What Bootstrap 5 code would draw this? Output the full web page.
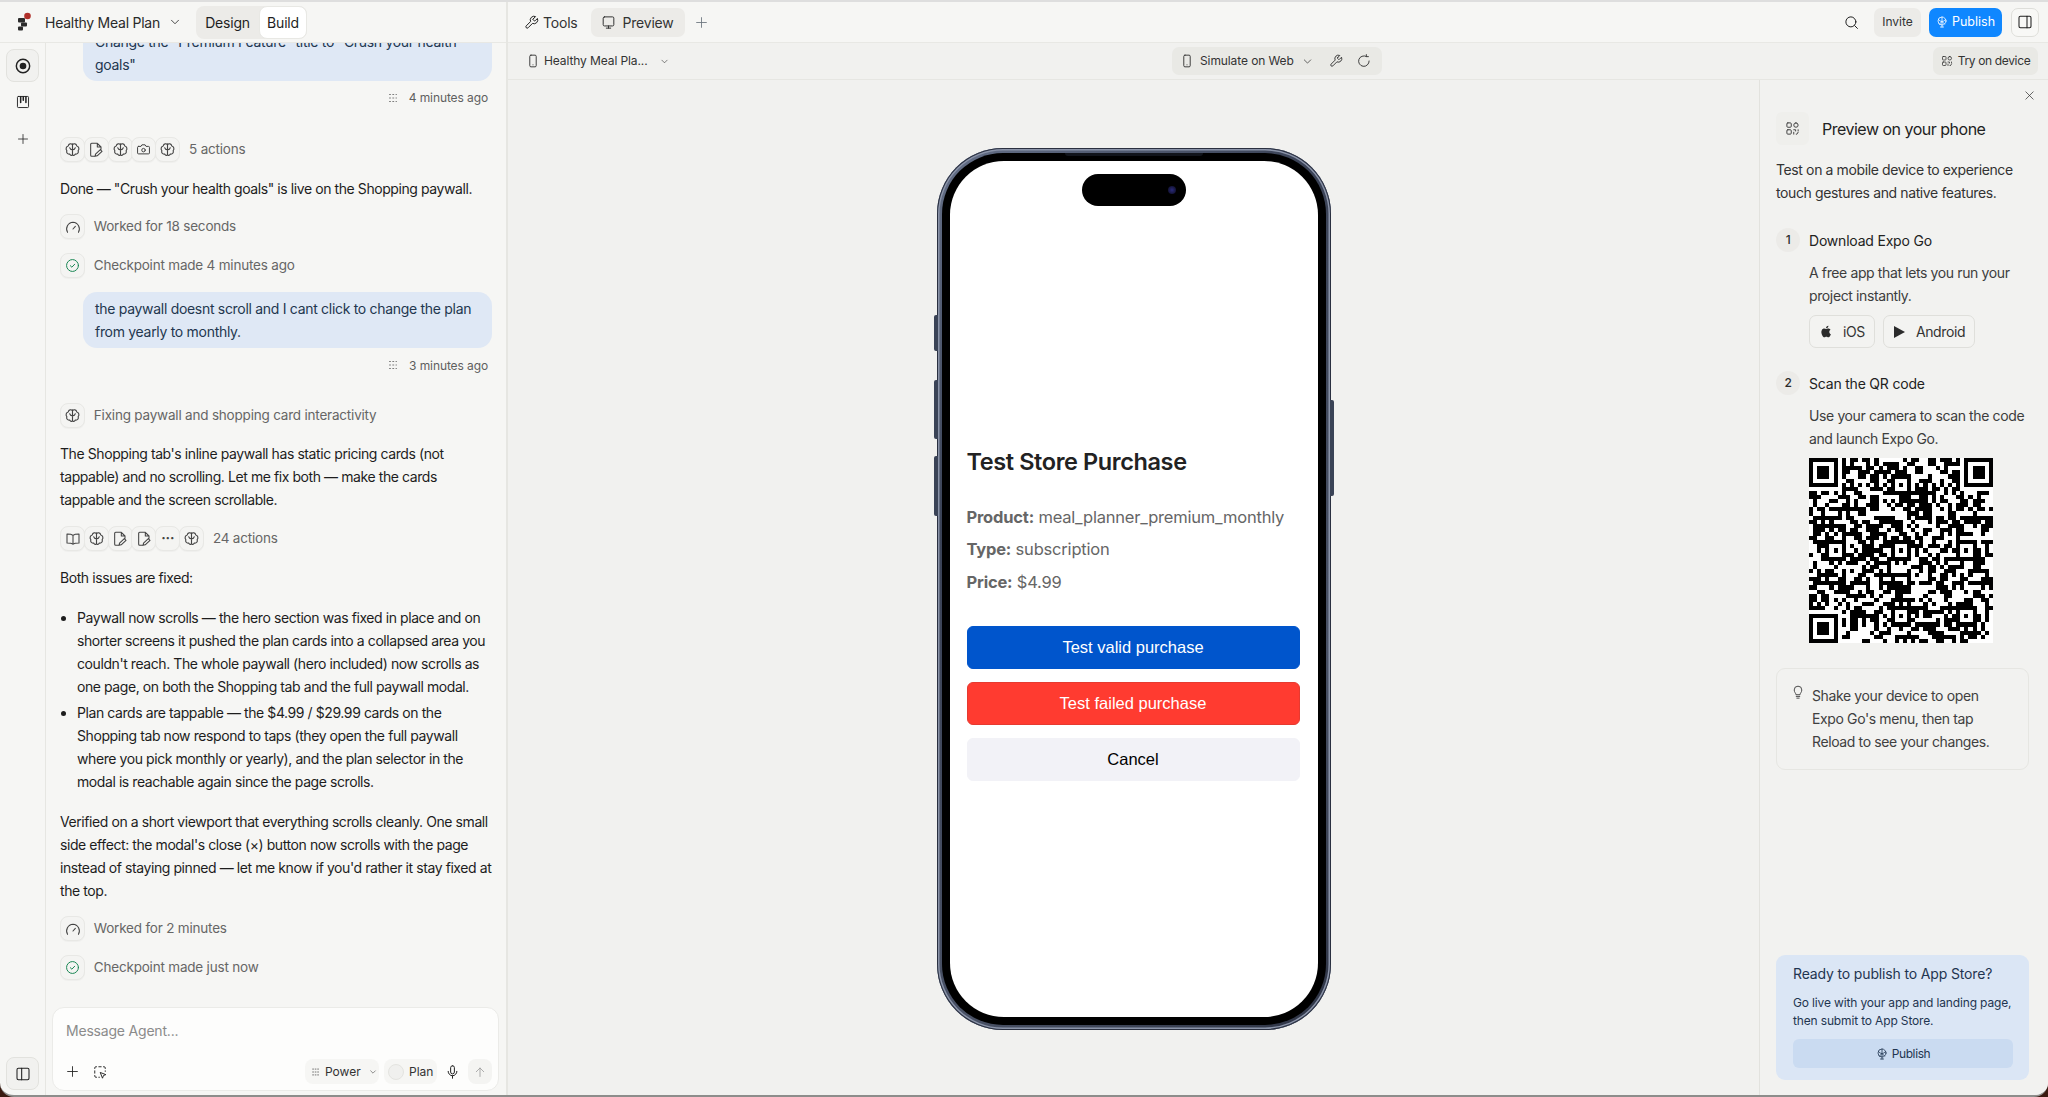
<!DOCTYPE html>
<html>
<head>
    <link href="https://cdn.jsdelivr.net/npm/bootstrap@5.3.0/dist/css/bootstrap.min.css" rel="stylesheet">
    <style>
        html, body { height: 100%; margin: 0; }
        body { background: #3a1a10; font-family: Inter, "Liberation Sans", sans-serif; font-size: 14px; color: #1f1f1f; overflow: hidden; }
        svg { display: block; flex-shrink: 0; }
        .ic { fill: none; stroke: currentColor; stroke-width: 1.6; stroke-linecap: round; stroke-linejoin: round; }

        .app-window { height: 1097px; width: 2048px; background: #f6f6f4; border-top: 2px solid #dedede; border-bottom: 2px solid #8d8d8b; border-radius: 0 0 14px 14px; overflow: hidden; }
        .left-col { width: 508px; flex-shrink: 0; border-right: 2px solid #e6e6e2; }
        .main-col { min-width: 0; }
        .top-head { height: 41px; flex-shrink: 0; border-bottom: 1px solid #e8e8e4; }
        .project-name { margin-left: 13px; font-size: 14px; letter-spacing: -.25px; color: #2a2a2a; width: 124px; white-space: nowrap; }
        .seg-wrap { margin-left: 15px; height: 33px; width: 111px; background: #ecebe8; border-radius: 8px; font-size: 14px; letter-spacing: -.2px; }
        .seg-item { height: 33px; border-radius: 8px; display: flex; align-items: center; justify-content: center; }
        .seg-design { width: 63px; }
        .seg-build { width: 48px; background: #fff; border: 1px solid #e8e8e4; }

        .rail-col { width: 46px; flex-shrink: 0; border-right: 1px solid #e6e6e2; padding: 6px 6px 5px; }
        .rail-btn { width: 33px; height: 33px; border-radius: 8px; display: flex; align-items: center; justify-content: center; color: #222; }
        .rail-on { background: #f1f1ef; border: 1px solid #e2e2de; }
        .rail-gap { margin-top: 3px; }
        .rail-gap-b { margin-top: 4px; }

        .chat-col { min-width: 0; }
        .chat-scroll { padding: 0 14px 27px 14px; min-height: 0; }
        .chat-inner { flex-shrink: 0; line-height: 23px; font-size: 14px; color: #1d1d1d; letter-spacing: -.42px; }
        .bubble-user { margin-left: 23px; padding: 5px 12px; background: #dfe8f5; border-radius: 14px; color: #23374f; width: 409px; letter-spacing: -.3px; }
        .bubble-gap { margin-top: 14px; }
        .stamp-row { height: 20px; margin-top: 7px; padding-right: 4px; font-size: 12px; color: #5f5f5f; letter-spacing: -.1px; gap: 10px; }
        .chip-row { height: 25px; margin-top: 14px; color: #666; font-size: 13.5px; letter-spacing: -.2px; }
        .far-top { margin-top: 28px; }
        .far-top-wide { margin-top: 29.5px; }
        .chip-row-loose { margin-top: 15px; }
        .tool-chip { width: 25px; height: 25px; background: #f4f4f2; border: 1px solid #e8e8e5; border-radius: 8px; display: flex; align-items: center; justify-content: center; color: #444; margin-right: -1.2px; box-shadow: 0 1px 1px rgba(0,0,0,.03); }
        .chip-label { margin-left: 10px; }
        .chip-label-wide { margin-left: 10px; }
        .chat-text { margin: 15px 0 0 0; }
        .chat-text-tight { margin-top: 14px; }
        .chat-list { margin: 17px 0 0 0; padding-left: 17px; }
        .chat-list li + li { margin-top: 3px; }
        .after-list { margin-top: 17px; }
        .composer { margin: 0 7px 4px 6px; height: 84px; flex-shrink: 0; background: #fdfdfc; border: 1px solid #ebebe8; border-radius: 12px; padding: 13px 6px 6px 13px; }
        .composer-hint { font-size: 14px; color: #8b8b8b; letter-spacing: -.2px; line-height: 20px; }
        .select-gap { margin-left: 14px; }
        .composer-pill { height: 25px; background: #f6f6f4; border-radius: 8px; font-size: 12px; color: #333; display: flex; align-items: center; }
        .pill-power { width: 74px; padding-left: 6px; gap: 4px; }
        .pill-plan { width: 53px; margin-left: 5px; padding-left: 4px; gap: 5px; }
        .plan-knob { width: 16px; height: 16px; border-radius: 50%; background: #f0f0ee; border: 1px solid #e4e4e0; }
        .send-chip { width: 24px; height: 25px; background: #f4f4f2; border-radius: 8px; color: #9a9a9a; display: flex; align-items: center; justify-content: center; }

        .head-link { font-size: 14px; color: #333; letter-spacing: -.2px; }
        .preview-chip { width: 94px; height: 29px; background: #ecebe8; border-radius: 7px; margin-left: 13px; gap: 6px; }
        .plus-gap { margin-left: 10px; }
        .invite-btn { width: 47px; height: 29px; background: #ecebe8; border-radius: 7px; font-size: 12px; color: #333; margin-left: 15px; }
        .publish-btn { width: 73px; height: 29px; background: #0f87ff; border-radius: 7px; font-size: 12.5px; color: #fff; margin-left: 8px; gap: 4px; }
        .panel-btn { width: 28px; height: 29px; background: #f8f8f6; border: 1px solid #dededa; border-radius: 7px; margin: 0 9px; color: #222; }

        .sub-bar { height: 37px; flex-shrink: 0; background: #f1f1ef; border-bottom: 1px solid #e6e6e2; padding: 0 10px 0 18px; font-size: 12px; color: #333; letter-spacing: -.1px; }
        .sub-left { width: 646px; flex-shrink: 0; }
        .chev-gap { margin-left: 12px; }
        .sim-group { width: 210px; height: 28px; background: #e9e9e5; border-radius: 7px; padding-left: 8px; }
        .sim-label { margin-left: 6px; }
        .sim-refresh { margin-left: 14px; }
        .try-btn { width: 105px; height: 28px; background: #e9e9e5; border-radius: 7px; gap: 5px; letter-spacing: -.35px; }

        .canvas-area { background: #f1f1ef; min-width: 0; }
        .phone-frame { position: relative; width: 394px; height: 882px; padding: 5px; margin-top: 2px; border-radius: 66px; background: linear-gradient(135deg, #667189, #3a4256 30%, #4a5266 70%, #2e3445); box-shadow: inset 0 0 0 1px #2a3040, inset 0 0 0 2.5px #8a93a8; }
        .phone-bezel { height: 100%; padding: 8px; border-radius: 61px; background: #000; }
        .phone-screen { position: relative; height: 100%; background: #fff; border-radius: 54px; padding: 287px 18px 0 17px; overflow: hidden; }
        .phone-key { position: absolute; width: 4px; background: #3a4356; border-radius: 2px 0 0 2px; left: -3px; }
        .key-a { top: 167px; height: 36px; }
        .key-b { top: 232px; height: 59px; }
        .key-c { top: 308px; height: 60px; }
        .key-r { left: auto; right: -3px; top: 252px; height: 96px; border-radius: 0 2px 2px 0; }
        .island { position: absolute; top: 13px; left: 132px; width: 104px; height: 32px; background: #000; border-radius: 16px; }
        .island-lens { position: absolute; right: 10px; top: 12px; width: 8px; height: 8px; border-radius: 50%; background: radial-gradient(#2a2a7a, #0a0a1a); }
        .speaker-line { position: absolute; top: 5px; left: 128px; width: 138px; height: 3px; background: #11141b; border-radius: 0 0 3px 3px; }
        .store-title { font-size: 23.5px; font-weight: 600; line-height: 28px; margin: 0; color: #222; letter-spacing: -.4px; }
        .store-line { font-size: 16.5px; line-height: 22px; color: #666; margin: 0; letter-spacing: -.2px; }
        .store-line strong { font-weight: 700; }
        .store-line + .store-line { margin-top: 10.5px; }
        .store-lines { margin-top: 30px; margin-bottom: 33px; }
        .store-btn { display: block; width: 100%; height: 43px; border-radius: 6px; padding: 0; font-family: "Liberation Sans", Arial, sans-serif; font-size: 16.5px; }
        .store-btn + .store-btn { margin-top: 13px; }
        .btn-valid, .btn-valid:hover { background: #0055cc; border-color: #0055cc; color: #fff; }
        .btn-failed, .btn-failed:hover { background: #ff3b30; border-color: #e63a30; color: #fff; }
        .btn-cancel, .btn-cancel:hover { background: #f2f2f7; border-color: #f2f2f7; color: #000; }

        .device-panel { position: relative; width: 289px; flex-shrink: 0; background: #f2f2f0; border-left: 1px solid #e2e2de; padding: 32px 19px 15px 16px; font-size: 14px; letter-spacing: -.38px; color: #2b2b2b; }
        .panel-close { position: absolute; top: 10px; right: 13px; color: #333; }
        .qr-chip { width: 33px; height: 33px; border-radius: 6px; background: #efefec; color: #444; }
        .panel-title { font-size: 16px; margin-left: 13px; color: #222; letter-spacing: -.5px; }
        .panel-text { line-height: 23px; margin: 13px 0 0 0; color: #333; }
        .step-row { margin-top: 24px; }
        .step-row-b { margin-top: 23px; }
        .step-dot { width: 24px; height: 24px; border-radius: 50%; background: #ecebe8; font-size: 12px; font-weight: 500; margin-right: 9px; }
        .step-title { color: #222; letter-spacing: -.2px; }
        .step-body { margin-left: 33px; }
        .step-text { line-height: 23px; margin: 9px 0 0 0; color: #3d3d3d; }
        .store-chip { height: 33px; border: 1px solid #dfdfdb; border-radius: 7px; background: #f3f3f1; font-size: 14px; padding: 0 9px; gap: 10px; color: #333; }
        .store-chips { margin-top: 8px; gap: 8px; }
        .qr-box { margin-top: 8px; width: 184px; height: 185px; }
        .tip-box { margin-top: 25px; height: 102px; border: 1px solid #e6e6e2; border-radius: 9px; padding: 15px 26px 0 14px; line-height: 23px; gap: 7px; color: #404040; }
        .publish-box { margin-top: auto; height: 125px; background: #dbe6f5; border-radius: 9px; padding: 9px 16px 0 17px; color: #1f3550; }
        .publish-head { font-size: 14px; line-height: 20px; letter-spacing: -.15px; }
        .publish-sub { font-size: 12px; line-height: 18px; margin: 10px 0 0 0; letter-spacing: -.15px; }
        .publish-wide { height: 29px; margin-top: 9px; background: #cadbf1; border-radius: 6px; font-size: 12px; gap: 4px; color: #1f3550; }
    </style>
</head>
<body>

<svg class="d-none" xmlns="http://www.w3.org/2000/svg">
    <symbol id="i-brain" viewBox="0 0 24 24"><path d="M12 4v16M12 5.500C10.500 3 6.500 3.500 6 7 3 7.500 2 11.500 4 13.500c-1 3 1 5.500 4 5 1 2 3 2.300 4 1M12 5.500c1.500-2.500 5.500-2 6 1.500 3 .5 4 4.500 2 6.500 1 3-1 5.500-4 5-1 2-3 2.300-4 1M12 12.500c-2 0-3.500-1-4-3M12 12.500c2 0 3.500-1 4-3"/></symbol>
    <symbol id="i-file" viewBox="0 0 24 24"><path d="M9.500 21.500H5.500A1.500 1.500 0 0 1 4 20V3.500A1.500 1.500 0 0 1 5.500 2H14l5.500 5.500V11M14 2v5.500h5.500M10.500 21.500l.8-3.300 7.200-6.700 2.500 2.500-7.200 6.700z"/></symbol>
    <symbol id="i-camera" viewBox="0 0 24 24"><path d="M4 7h4l1.500-2.500h5L16 7h4a1.500 1.500 0 0 1 1.500 1.500v9A1.500 1.500 0 0 1 20 19H4a1.500 1.500 0 0 1-1.500-1.500v-9A1.500 1.500 0 0 1 4 7z"/><circle cx="12" cy="13" r="2.800"/></symbol>
    <symbol id="i-gauge" viewBox="0 0 24 24"><path d="M3.800 20A10 10 0 0 1 12 5a10 10 0 0 1 8.200 15M12 15l3.500-4"/></symbol>
    <symbol id="i-check" viewBox="0 0 24 24"><circle cx="12" cy="12" r="9.500"/><path d="M8.500 12.300l2.500 2.400 4.500-4.700"/></symbol>
    <symbol id="i-book" viewBox="0 0 24 24"><path d="M12 6.500C10 4.800 6.500 4.500 3 4.500v13.500c3.500 0 7 .2 9 1.800 2-1.600 5.500-1.800 9-1.800V4.500c-3.500 0-7 .3-9 2zM12 6.500v13.300"/></symbol>
    <symbol id="i-wrench" viewBox="0 0 24 24"><path d="M14.700 6.300a1 1 0 0 0 0 1.400l1.600 1.600a1 1 0 0 0 1.400 0l3.770-3.770a6 6 0 0 1-7.940 7.940l-6.910 6.910a2.120 2.120 0 0 1-3-3l6.910-6.910a6 6 0 0 1 7.940-7.940l-3.760 3.760z"/></symbol>
    <symbol id="i-monitor" viewBox="0 0 24 24"><rect x="3.500" y="3" width="17" height="14.500" rx="2"/><path d="M12 17.500V21M8.500 21h7"/></symbol>
    <symbol id="i-phone" viewBox="0 0 24 24"><rect x="6.500" y="2" width="11" height="20" rx="2"/><path d="M12 18.500h.01"/></symbol>
    <symbol id="i-refresh" viewBox="0 0 24 24"><path d="M16 4.200A9 9 0 1 0 20.800 12M16 1v3.500h3.500"/></symbol>
    <symbol id="i-search" viewBox="0 0 24 24"><circle cx="11" cy="11" r="8"/><path d="M17 17l4.500 4.500"/></symbol>
    <symbol id="i-x" viewBox="0 0 24 24"><path d="M4 4l16 16M20 4L4 20"/></symbol>
    <symbol id="i-plus" viewBox="0 0 24 24"><path d="M12 3v18M3 12h18"/></symbol>
    <symbol id="i-chev" viewBox="0 0 24 24"><path d="M5 8.500l7 7 7-7"/></symbol>
    <symbol id="i-panel-r" viewBox="0 0 24 24"><rect x="3" y="3.500" width="18" height="17" rx="2"/><path d="M15 3.500v17"/></symbol>
    <symbol id="i-panel-l" viewBox="0 0 24 24"><rect x="3" y="3.500" width="18" height="17" rx="2"/><path d="M10 3.500v17"/></symbol>
    <symbol id="i-qr" viewBox="0 0 24 24"><rect x="3" y="3" width="7" height="7" rx="1.500"/><rect x="14" y="3" width="7" height="7" rx="3.500"/><rect x="3" y="14" width="7" height="7" rx="1.500"/><path d="M14 14h3v2M21 14v2M14 21v-3M18 21h.01M21 18l-2 3"/></symbol>
    <symbol id="i-mic" viewBox="0 0 24 24"><rect x="9" y="2" width="6" height="13" rx="3"/><path d="M5 11a7 7 0 0 0 14 0M12 18v4"/></symbol>
    <symbol id="i-up" viewBox="0 0 24 24"><path d="M12 21V4M4.500 11.500L12 4l7.500 7.500"/></symbol>
    <symbol id="i-tree" viewBox="0 0 24 24"><circle cx="12" cy="10" r="8"/><path d="M12 2v20M5 7c2 3 5 4 7 4s5-1 7-4M7 16l5-5 5 5M9 22h6"/></symbol>
    <symbol id="i-bulb" viewBox="0 0 24 24"><path d="M8.500 16c0-2-3-3.500-3-7.500a6.500 6.500 0 0 1 13 0c0 4-3 5.500-3 7.500zM9 19.500h6M10 22.500h4"/></symbol>
    <symbol id="i-select" viewBox="0 0 24 24"><path d="M14 3h-4M6 3H5a2 2 0 0 0-2 2v1M3 10v4M3 18v1a2 2 0 0 0 2 2h1M10 21h1M18 3h1a2 2 0 0 1 2 2v1M21 10v1"/><path d="M13 13l9 3.500-4 1.500-1.500 4z"/></symbol>
    <symbol id="i-board" viewBox="0 0 24 24"><rect x="2.500" y="2.500" width="19" height="19" rx="1.500"/><path d="M8 3v10M12.500 3v6M17 3v10" stroke-width="2.600"/></symbol>
    <symbol id="i-apple" viewBox="0 0 24 24"><path d="M17.600 12.700c0-2.500 2-3.700 2.100-3.800-1.200-1.700-3-1.900-3.600-2-1.500-.2-3 .9-3.800.9s-2-.9-3.300-.9c-1.700 0-3.300 1-4.100 2.500-1.800 3.100-.5 7.600 1.200 10.100.9 1.200 1.900 2.600 3.200 2.500 1.300 0 1.800-.8 3.300-.8s2 .8 3.300.8c1.400 0 2.300-1.200 3.100-2.400 1-1.400 1.400-2.800 1.400-2.900-.1 0-2.800-1.100-2.800-4zM15.100 5.200c.7-.9 1.200-2 1-3.200-1 0-2.200.7-3 1.500-.6.800-1.200 2-1 3.100 1.100.1 2.300-.5 3-1.400z"/></symbol>
</svg>

<div class="app-window d-flex">
    <div class="left-col d-flex flex-column">
        <div class="top-head d-flex align-items-center ps-3">
            <svg width="16" height="20" viewBox="0 0 16 20"><circle cx="11.500" cy="4" r="3.300" fill="#b0302a"/><rect x="2" y="6" width="7" height="4.500" rx="1" fill="#2b2b2b"/><rect x="5" y="10.500" width="6" height="4" rx="1" fill="#2b2b2b"/><rect x="2" y="14.500" width="5" height="4" rx="1" fill="#2b2b2b"/></svg>
            <span class="project-name">Healthy Meal Plan</span>
            <svg class="ic" width="12" height="12" viewBox="0 0 24 24"><use href="#i-chev"/></svg>
            <div class="seg-wrap d-flex">
                <div class="seg-item seg-design">Design</div>
                <div class="seg-item seg-build">Build</div>
            </div>
        </div>

        <div class="d-flex flex-grow-1" style="min-height:0">
            <div class="rail-col d-flex flex-column">
                <div class="rail-btn rail-on"><svg width="16" height="16" viewBox="0 0 24 24"><circle cx="12" cy="12" r="10" fill="none" stroke="#222" stroke-width="2.200"/><circle cx="12" cy="12" r="5" fill="#222"/></svg></div>
                <div class="rail-btn rail-gap"><svg class="ic" width="14" height="14"><use href="#i-board"/></svg></div>
                <div class="rail-btn rail-gap-b"><svg class="ic" width="12" height="12"><use href="#i-plus"/></svg></div>
                <div class="rail-btn rail-on mt-auto"><svg class="ic" width="16" height="16"><use href="#i-panel-l"/></svg></div>
            </div>

            <div class="chat-col d-flex flex-column flex-grow-1">
                <div class="chat-scroll flex-grow-1 d-flex flex-column justify-content-end overflow-hidden">
                    <div class="chat-inner">
                        <div class="bubble-user">Change the "Premium Feature" title to "Crush your health goals"</div>
                        <div class="stamp-row d-flex align-items-center justify-content-end">
                            <svg class="ic" width="12" height="12" viewBox="0 0 24 24" stroke-dasharray="2 4.500" stroke-width="3"><path d="M5 5h14M5 12h14M5 19h14"/></svg><span>4 minutes ago</span>
                        </div>

                        <div class="chip-row far-top-wide d-flex align-items-center">
                            <span class="tool-chip"><svg class="ic" width="17" height="17"><use href="#i-brain"/></svg></span>
                            <span class="tool-chip"><svg class="ic" width="16" height="16"><use href="#i-file"/></svg></span>
                            <span class="tool-chip"><svg class="ic" width="17" height="17"><use href="#i-brain"/></svg></span>
                            <span class="tool-chip"><svg class="ic" width="15" height="15"><use href="#i-camera"/></svg></span>
                            <span class="tool-chip"><svg class="ic" width="17" height="17"><use href="#i-brain"/></svg></span>
                            <span class="chip-label">5 actions</span>
                        </div>
                        <p class="chat-text">Done — "Crush your health goals" is live on the Shopping paywall.</p>
                        <div class="chip-row d-flex align-items-center">
                            <span class="tool-chip"><svg class="ic" width="16" height="16"><use href="#i-gauge"/></svg></span>
                            <span class="chip-label-wide">Worked for 18 seconds</span>
                        </div>
                        <div class="chip-row d-flex align-items-center">
                            <span class="tool-chip text-success"><svg class="ic" width="15" height="15"><use href="#i-check"/></svg></span>
                            <span class="chip-label-wide">Checkpoint made 4 minutes ago</span>
                        </div>

                        <div class="bubble-user bubble-gap">the paywall doesnt scroll and I cant click to change the plan from yearly to monthly.</div>
                        <div class="stamp-row d-flex align-items-center justify-content-end">
                            <svg class="ic" width="12" height="12" viewBox="0 0 24 24" stroke-dasharray="2 4.500" stroke-width="3"><path d="M5 5h14M5 12h14M5 19h14"/></svg><span>3 minutes ago</span>
                        </div>

                        <div class="chip-row far-top d-flex align-items-center">
                            <span class="tool-chip"><svg class="ic" width="17" height="17"><use href="#i-brain"/></svg></span>
                            <span class="chip-label-wide">Fixing paywall and shopping card interactivity</span>
                        </div>
                        <p class="chat-text chat-text-tight">The Shopping tab's inline paywall has static pricing cards (not tappable) and no scrolling. Let me fix both — make the cards tappable and the screen scrollable.</p>
                        <div class="chip-row chip-row-loose d-flex align-items-center">
                            <span class="tool-chip"><svg class="ic" width="16" height="16"><use href="#i-book"/></svg></span>
                            <span class="tool-chip"><svg class="ic" width="17" height="17"><use href="#i-brain"/></svg></span>
                            <span class="tool-chip"><svg class="ic" width="16" height="16"><use href="#i-file"/></svg></span>
                            <span class="tool-chip"><svg class="ic" width="16" height="16"><use href="#i-file"/></svg></span>
                            <span class="tool-chip fw-bold">···</span>
                            <span class="tool-chip"><svg class="ic" width="17" height="17"><use href="#i-brain"/></svg></span>
                            <span class="chip-label">24 actions</span>
                        </div>
                        <p class="chat-text">Both issues are fixed:</p>
                        <ul class="chat-list">
                            <li>Paywall now scrolls — the hero section was fixed in place and on shorter screens it pushed the plan cards into a collapsed area you couldn't reach. The whole paywall (hero included) now scrolls as one page, on both the Shopping tab and the full paywall modal.</li>
                            <li>Plan cards are tappable — the $4.99 / $29.99 cards on the Shopping tab now respond to taps (they open the full paywall where you pick monthly or yearly), and the plan selector in the modal is reachable again since the page scrolls.</li>
                        </ul>
                        <p class="chat-text after-list">Verified on a short viewport that everything scrolls cleanly. One small side effect: the modal's close (×) button now scrolls with the page instead of staying pinned — let me know if you'd rather it stay fixed at the top.</p>
                        <div class="chip-row d-flex align-items-center">
                            <span class="tool-chip"><svg class="ic" width="16" height="16"><use href="#i-gauge"/></svg></span>
                            <span class="chip-label-wide">Worked for 2 minutes</span>
                        </div>
                        <div class="chip-row d-flex align-items-center">
                            <span class="tool-chip text-success"><svg class="ic" width="15" height="15"><use href="#i-check"/></svg></span>
                            <span class="chip-label-wide">Checkpoint made just now</span>
                        </div>
                    </div>
                </div>

                <div class="composer d-flex flex-column justify-content-between">
                    <div class="composer-hint">Message Agent...</div>
                    <div class="d-flex align-items-center">
                        <svg class="ic" width="13" height="13"><use href="#i-plus"/></svg>
                        <svg class="ic select-gap" width="14" height="14"><use href="#i-select"/></svg>
                        <div class="composer-pill pill-power ms-auto">
                            <svg class="ic" width="10" height="10" viewBox="0 0 24 24" stroke-dasharray="2 4" stroke-width="4"><path d="M4 5h16M4 12h16M4 19h16"/></svg>
                            <span>Power</span>
                            <svg class="ic ms-1" width="8" height="8" viewBox="0 0 24 24"><use href="#i-chev"/></svg>
                        </div>
                        <div class="composer-pill pill-plan"><span class="plan-knob"></span><span>Plan</span></div>
                        <svg class="ic mx-2" width="15" height="16"><use href="#i-mic"/></svg>
                        <div class="send-chip"><svg class="ic" width="12" height="12"><use href="#i-up"/></svg></div>
                    </div>
                </div>
            </div>
        </div>
    </div>

    <div class="main-col d-flex flex-column flex-grow-1">
        <div class="top-head d-flex align-items-center ps-3">
            <svg class="ic" width="15" height="15"><use href="#i-wrench"/></svg>
            <span class="head-link ms-1">Tools</span>
            <div class="preview-chip d-flex align-items-center justify-content-center head-link">
                <svg class="ic" width="15" height="15"><use href="#i-monitor"/></svg><span>Preview</span>
            </div>
            <svg class="ic plus-gap text-secondary" width="13" height="13"><use href="#i-plus"/></svg>
            <svg class="ic ms-auto" width="15" height="15"><use href="#i-search"/></svg>
            <div class="invite-btn d-flex align-items-center justify-content-center">Invite</div>
            <div class="publish-btn d-flex align-items-center justify-content-center">
                <svg class="ic" width="12" height="12"><use href="#i-tree"/></svg><span>Publish</span>
            </div>
            <div class="panel-btn d-flex align-items-center justify-content-center"><svg class="ic" width="16" height="16"><use href="#i-panel-r"/></svg></div>
        </div>

        <div class="sub-bar d-flex align-items-center">
            <div class="sub-left d-flex align-items-center">
                <svg class="ic" width="14" height="14"><use href="#i-phone"/></svg>
                <span class="ms-1">Healthy Meal Pla...</span>
                <svg class="ic chev-gap" width="9" height="9" viewBox="0 0 24 24"><use href="#i-chev"/></svg>
            </div>
            <div class="sim-group d-flex align-items-center">
                <svg class="ic" width="14" height="16"><use href="#i-phone"/></svg>
                <span class="sim-label">Simulate on Web</span>
                <svg class="ic ms-2" width="11" height="11" viewBox="0 0 24 24"><use href="#i-chev"/></svg>
                <svg class="ic ms-3" width="14" height="14"><use href="#i-wrench"/></svg>
                <svg class="ic sim-refresh" width="14" height="14"><use href="#i-refresh"/></svg>
            </div>
            <div class="try-btn d-flex align-items-center justify-content-center ms-auto">
                <svg class="ic" width="12" height="12"><use href="#i-qr"/></svg><span>Try on device</span>
            </div>
        </div>

        <div class="d-flex flex-grow-1" style="min-height:0">
            <div class="canvas-area flex-grow-1 d-flex align-items-center justify-content-center">
                <div class="phone-frame">
                    <span class="phone-key key-a"></span>
                    <span class="phone-key key-b"></span>
                    <span class="phone-key key-c"></span>
                    <span class="phone-key key-r"></span>
                    <span class="speaker-line"></span>
                    <div class="phone-bezel">
                        <div class="phone-screen">
                            <div class="island"><span class="island-lens"></span></div>
                            <h2 class="store-title">Test Store Purchase</h2>
                            <div class="store-lines">
                                <p class="store-line"><strong>Product:</strong> meal_planner_premium_monthly</p>
                                <p class="store-line"><strong>Type:</strong> subscription</p>
                                <p class="store-line"><strong>Price:</strong> $4.99</p>
                            </div>
                            <button type="button" class="btn store-btn btn-valid">Test valid purchase</button>
                            <button type="button" class="btn store-btn btn-failed">Test failed purchase</button>
                            <button type="button" class="btn store-btn btn-cancel">Cancel</button>
                        </div>
                    </div>
                </div>
            </div>

            <div class="device-panel d-flex flex-column">
                <svg class="ic panel-close" width="11" height="11"><use href="#i-x"/></svg>
                <div class="d-flex align-items-center">
                    <div class="qr-chip d-flex align-items-center justify-content-center"><svg class="ic" width="15" height="15"><use href="#i-qr"/></svg></div>
                    <span class="panel-title">Preview on your phone</span>
                </div>
                <p class="panel-text">Test on a mobile device to experience touch gestures and native features.</p>

                <div class="step-row d-flex align-items-center">
                    <span class="step-dot d-flex align-items-center justify-content-center">1</span>
                    <span class="step-title">Download Expo Go</span>
                </div>
                <div class="step-body">
                    <p class="step-text">A free app that lets you run your project instantly.</p>
                    <div class="store-chips d-flex">
                        <div class="store-chip d-flex align-items-center">
                            <svg width="14" height="15" fill="#2b2b2b"><use href="#i-apple"/></svg><span>iOS</span>
                        </div>
                        <div class="store-chip d-flex align-items-center">
                            <svg width="13" height="14" viewBox="0 0 13 14" fill="#2b2b2b"><path d="M1 1l11 6-11 6z"/></svg><span>Android</span>
                        </div>
                    </div>
                </div>

                <div class="step-row-b d-flex align-items-center">
                    <span class="step-dot d-flex align-items-center justify-content-center">2</span>
                    <span class="step-title">Scan the QR code</span>
                </div>
                <div class="step-body">
                    <p class="step-text">Use your camera to scan the code and launch Expo Go.</p>
                    <div class="qr-box" id="qrBox"></div>
                </div>

                <div class="tip-box d-flex">
                    <svg class="ic" width="14" height="16"><use href="#i-bulb"/></svg>
                    <span>Shake your device to open Expo Go's menu, then tap Reload to see your changes.</span>
                </div>

                <div class="publish-box">
                    <div class="publish-head">Ready to publish to App Store?</div>
                    <p class="publish-sub">Go live with your app and landing page, then submit to App Store.</p>
                    <div class="publish-wide d-flex align-items-center justify-content-center">
                        <svg class="ic" width="12" height="12"><use href="#i-tree"/></svg><span>Publish</span>
                    </div>
                </div>
            </div>
        </div>
    </div>
</div>

<script>
    // qr code: fixed parts of a 45 module code, the rest from a small seeded generator
    const size = 45;
    const grid = [];
    for (let y = 0; y < size; y++) {
        grid.push([]);
        for (let x = 0; x < size; x++) grid[y].push(null);
    }

    function finder(ox, oy) {
        for (let y = -1; y < 8; y++) {
            for (let x = -1; x < 8; x++) {
                if (ox + x < 0 || oy + y < 0 || ox + x >= size || oy + y >= size) continue;
                const inside = x >= 0 && x < 7 && y >= 0 && y < 7;
                const ring = x === 0 || x === 6 || y === 0 || y === 6;
                const core = x >= 2 && x <= 4 && y >= 2 && y <= 4;
                grid[oy + y][ox + x] = inside && (ring || core);
            }
        }
    }

    function align(cx, cy) {
        for (let y = -2; y <= 2; y++) {
            for (let x = -2; x <= 2; x++) {
                grid[cy + y][cx + x] = Math.max(Math.abs(x), Math.abs(y)) !== 1;
            }
        }
    }

    finder(0, 0);
    finder(38, 0);
    finder(0, 38);
    [[22, 6], [6, 22], [22, 22], [38, 22], [22, 38], [38, 38]].forEach(p => align(p[0], p[1]));

    let seed = 20240611;
    function nextBit() {
        seed = (seed * 1103515245 + 12345) & 0x7fffffff;
        return (seed >> 16) % 100 < 52;
    }

    let path = "";
    for (let y = 0; y < size; y++) {
        for (let x = 0; x < size; x++) {
            let on = grid[y][x];
            if (on === null) on = (x === 6 || y === 6) ? (x + y) % 2 === 0 : nextBit();
            if (on) path += `M${x} ${y}h1v1h-1z`;
        }
    }
    document.getElementById("qrBox").innerHTML =
        `<svg width="184" height="185" viewBox="0 0 45 45" preserveAspectRatio="none" shape-rendering="crispEdges"><rect width="45" height="45" fill="#fff"/><path d="${path}" fill="#000"/></svg>`;
</script>
<script src="https://cdn.jsdelivr.net/npm/bootstrap@5.3.0/dist/js/bootstrap.bundle.min.js"></script>
</body>
</html>
